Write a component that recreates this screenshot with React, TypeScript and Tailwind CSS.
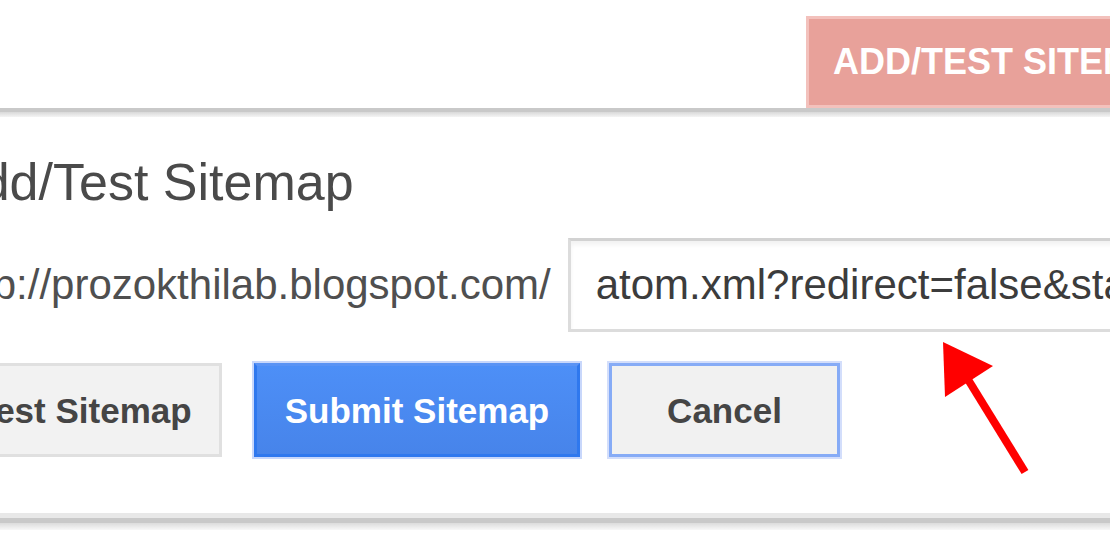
export default function App() {
  return (
    <div className="relative h-[550px] w-[1110px] overflow-hidden bg-white font-['Liberation_Sans',Arial,sans-serif]">
      {/* page header with the add/test button */}
      <div className="flex h-[108px] pt-[16px]">
        <div className="ml-[806px] flex h-[92px] shrink-0 items-center whitespace-nowrap border-[3px] border-[#f3c1bc] bg-[#e8a19a] px-[24px] text-[36px] font-bold leading-none text-white">
          ADD/TEST SITEMAP
        </div>
      </div>

      {/* dialog top edge */}
      <div className="h-[4px] bg-[#c9c9c9]" />
      <div className="h-[5px] bg-linear-to-b from-[#d9d9d9] to-[#f4f4f4]" />

      {/* dialog body */}
      <div className="-ml-[54px] flex h-[396px] flex-col">
        <h2 className="mt-[39px] whitespace-nowrap text-[52px] font-normal leading-[52px] text-[#4a4a4a]">
          Add/Test Sitemap
        </h2>

        <div className="mt-[30px] flex h-[94px] items-center">
          <span className="whitespace-nowrap text-[42px] leading-none text-[#4f4f4f]">
            http://prozokthilab.blogspot.com/
          </span>
          <input
            readOnly
            value="atom.xml?redirect=false&start-index=1&max-results=500"
            className="ml-[17px] h-[94px] w-[700px] shrink-0 border-[3px] border-[#dcdcdc] border-t-[#d2d2d2] bg-white pl-[25px] text-[42px] leading-none text-[#3c3c3c] shadow-[inset_0_4px_4px_rgba(0,0,0,0.05)] outline-none"
          />
        </div>

        <div className="mt-[31px] flex h-[94px]">
          <div className="flex h-[94px] w-[276px] shrink-0 items-center justify-center whitespace-nowrap border-[3px] border-[#e0e0e0] bg-[#f2f2f2] text-[35px] font-bold leading-none text-[#454545]">
            Test Sitemap
          </div>
          <div className="ml-[32px] flex h-[94px] w-[326px] shrink-0 items-center justify-center whitespace-nowrap border-[3px] border-[#2f78ee] border-t-[#5a93f4] bg-linear-to-b from-[#4d8ff7] to-[#4784ea] text-[35px] font-bold leading-none text-white shadow-[0_0_0_2px_#c8d7fb]">
            Submit Sitemap
          </div>
          <div className="ml-[29px] flex h-[94px] w-[231px] shrink-0 items-center justify-center whitespace-nowrap border-[3px] border-[#86abf6] bg-[#f1f1f1] text-[35px] font-bold leading-none text-[#454545] shadow-[0_0_0_2px_#d3defb]">
            Cancel
          </div>
        </div>
      </div>

      {/* dialog bottom edge */}
      <div className="h-[5px] bg-[#e8e8e8]" />
      <div className="h-[5px] bg-[#c9c9c9]" />
      <div className="h-[7px] bg-linear-to-b from-[#dcdcdc] to-[#f8f8f8]" />

      {/* red annotation arrow */}
      <svg
        className="absolute left-[930px] top-[335px]"
        width="110"
        height="150"
        viewBox="0 0 110 150"
      >
        <polygon points="13,7 15,62 63,31" fill="#ff0000" />
        <line x1="34" y1="38" x2="95" y2="137" stroke="#ff0000" strokeWidth="8" />
      </svg>
    </div>
  );
}
